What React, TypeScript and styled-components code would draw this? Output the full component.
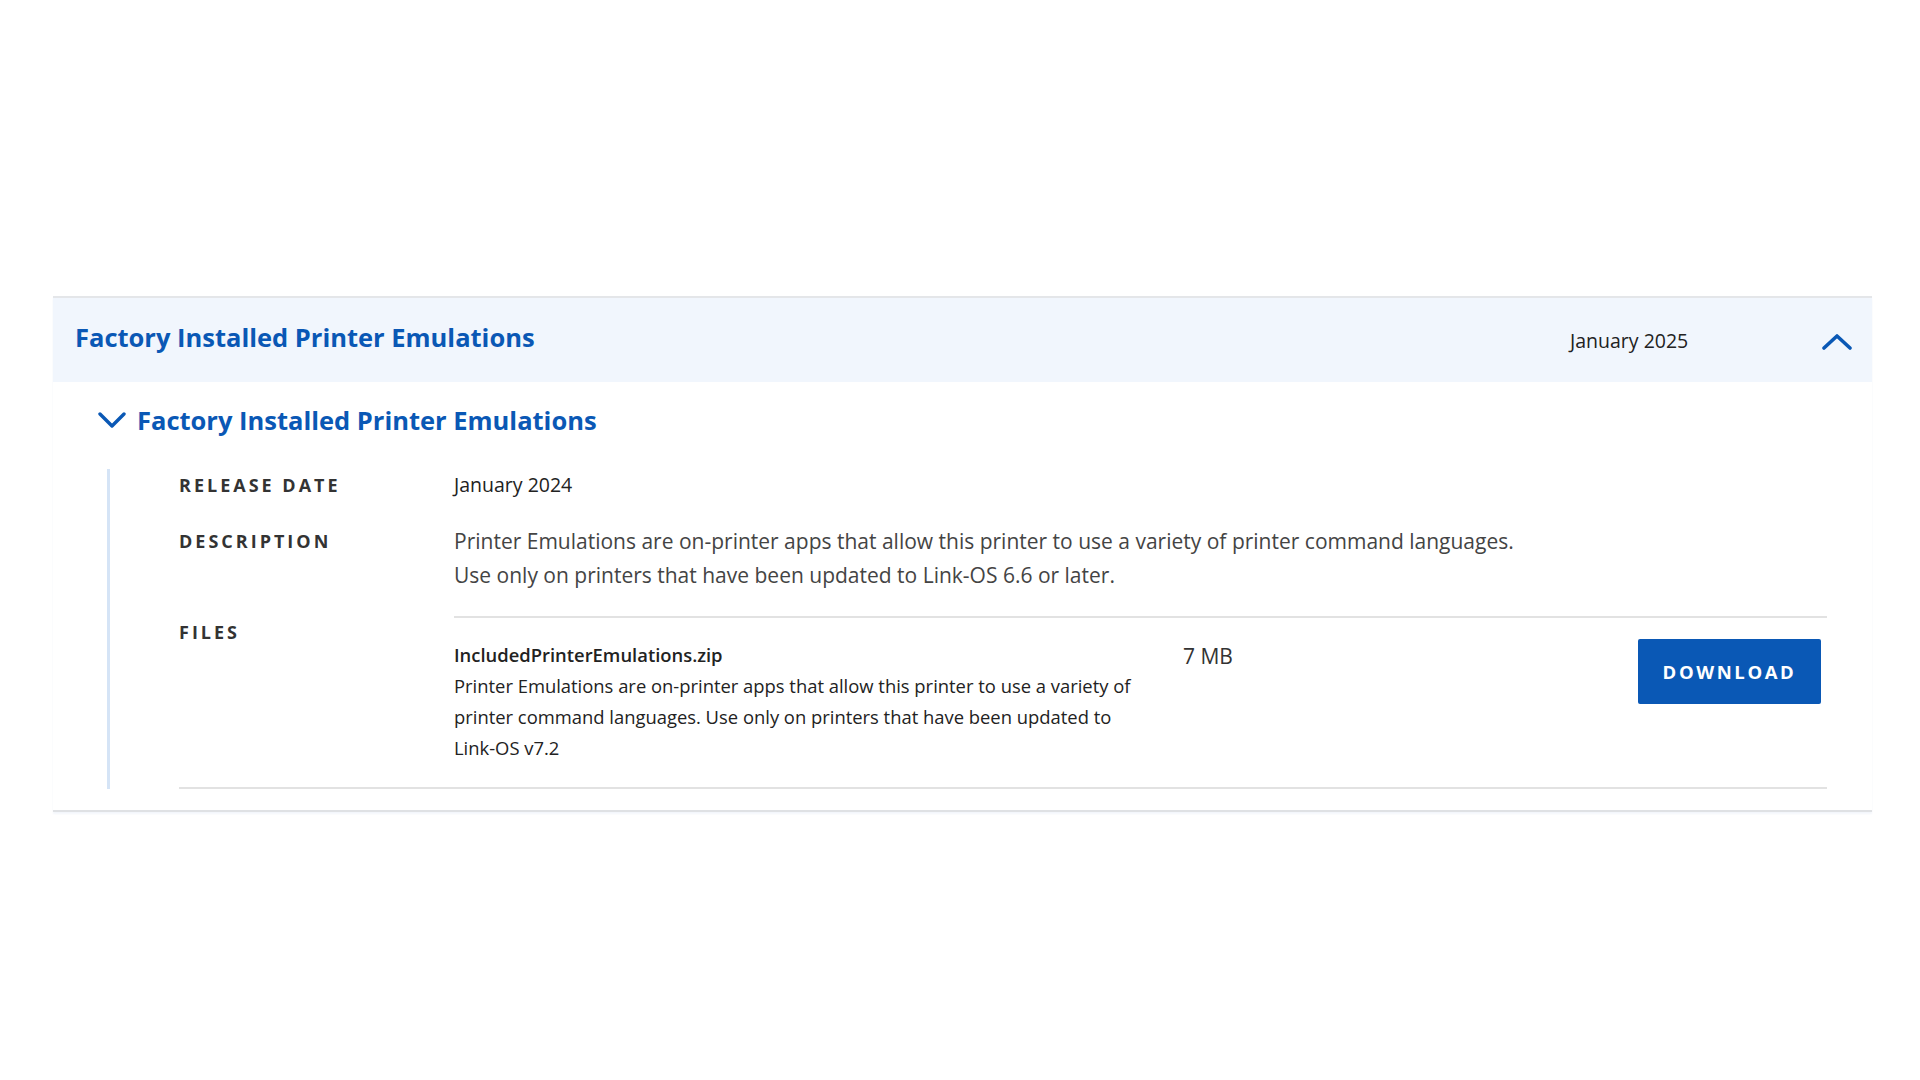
import { createGlobalStyle, styled } from 'styled-components';

const GlobalStyle = createGlobalStyle`
  html, body {
    margin: 0;
    padding: 0;
    background: #ffffff;
  }
  body {
    font-family: "Open Sans", Lato, Arial, sans-serif;
    color: #222;
  }
  * {
    box-sizing: border-box;
  }
`;

const ChevronUp = () => (
  <svg width="30" height="17" viewBox="0 0 30 17" fill="none">
    <polyline points="2,15 15,3 28,15" stroke="#0a58b5" strokeWidth="3.6" strokeLinecap="round" strokeLinejoin="round" />
  </svg>
);

const ChevronDown = () => (
  <svg width="28" height="16" viewBox="0 0 28 16" fill="none">
    <polyline points="2,2 14,14 26,2" stroke="#0a58b5" strokeWidth="3.4" strokeLinecap="round" strokeLinejoin="round" />
  </svg>
);

const App = () => {
  return (
    <>
      <GlobalStyle />
      <Page>
        <Panel>
          <Header>
            <Title>Factory Installed Printer Emulations</Title>
            <HeaderDate>January 2025</HeaderDate>
            <Toggle>
              <ChevronUp />
            </Toggle>
          </Header>
          <Body>
            <SubHeader>
              <ChevronDown />
              <SubTitle>Factory Installed Printer Emulations</SubTitle>
            </SubHeader>
            <Details>
              <Grid>
                <Label>Release Date</Label>
                <Value>January 2024</Value>

                <Label $top={32}>Description</Label>
                <Description>
                  Printer Emulations are on-printer apps that allow this printer to use a variety of printer command languages.
                  <br />
                  Use only on printers that have been updated to Link-OS 6.6 or later.
                </Description>

                <Label $top={24} $pad={4}>Files</Label>
                <FileList>
                  <FileRow>
                    <FileInfo>
                      <FileName>IncludedPrinterEmulations.zip</FileName>
                      <FileText>
                        Printer Emulations are on-printer apps that allow this printer to use a variety of printer command languages. Use only on printers that have been updated to <NoWrap>Link-OS</NoWrap> v7.2
                      </FileText>
                    </FileInfo>
                    <FileSize>7 MB</FileSize>
                    <DownloadButton>Download</DownloadButton>
                  </FileRow>
                </FileList>
              </Grid>
            </Details>
          </Body>
        </Panel>
      </Page>
    </>
  );
};

export default App;

const Page = styled.div`
  width: 1920px;
  height: 1080px;
  padding: 296px 48px 0 53px;
`;

const Panel = styled.section`
  width: 100%;
  border-top: 2px solid #e4e6e9;
  border-bottom: 2px solid #dfe1e4;
  box-shadow: 0 2px 2px rgba(10, 88, 181, 0.05);
`;

const Header = styled.div`
  height: 84px;
  display: flex;
  align-items: center;
  background: #f1f6fd;
  padding: 0 20px 0 22px;
`;

const Title = styled.h2`
  flex: 1;
  margin: 0 0 6px;
  font-size: 25.5px;
  font-weight: 700;
  color: #0a58b5;
`;

const HeaderDate = styled.span`
  width: 252px;
  font-size: 19.5px;
  color: #222;
  margin-top: 1px;
`;

const Toggle = styled.span`
  display: flex;
  align-items: center;
  margin-top: 2px;
`;

const Body = styled.div`
  padding: 22px 45px 21px 45px;
`;

const SubHeader = styled.div`
  display: flex;
  align-items: center;
  gap: 11px;
  height: 32px;
  h3 {
    margin: 0;
  }
`;

const SubTitle = styled.h3`
  font-size: 25.5px;
  font-weight: 700;
  color: #0a58b5;
`;

const Details = styled.div`
  margin: 33px 0 0 9px;
  border-left: 3px solid #d5e4f6;
  padding: 4px 0 0 69px;
`;

const Grid = styled.div`
  display: grid;
  grid-template-columns: 275px 1fr;
  align-items: start;
  border-bottom: 2px solid #e2e2e2;
`;

const Label = styled.div<{ $top?: number; $pad?: number }>`
  margin-top: ${(p) => p.$top ?? 0}px;
  padding-top: ${(p) => p.$pad ?? 0}px;
  font-size: 18px;
  line-height: 24px;
  font-weight: 700;
  letter-spacing: 3px;
  text-transform: uppercase;
  color: #333;
`;

const Value = styled.div`
  font-size: 19.5px;
  line-height: 24px;
  color: #222;
`;

const Description = styled.div`
  margin-top: 27px;
  font-size: 21px;
  line-height: 34px;
  color: #444;
`;

const FileList = styled.div`
  margin-top: 24px;
  border-top: 2px solid #e2e2e2;
`;

const FileRow = styled.div`
  display: flex;
  align-items: flex-start;
  padding: 21px 6px 24px 0;
`;

const FileInfo = styled.div`
  width: 700px;
  font-size: 18.4px;
  line-height: 31px;
  color: #222;
`;

const FileName = styled.div`
  font-weight: 600;
`;

const FileText = styled.div``;

const NoWrap = styled.span`
  white-space: nowrap;
`;

const FileSize = styled.div`
  flex: 1;
  margin-left: 29px;
  font-size: 21px;
  line-height: 34px;
  color: #333;
`;

const DownloadButton = styled.button`
  width: 183px;
  height: 65px;
  border: none;
  border-radius: 2px;
  background: #0a58b5;
  color: #fff;
  font-family: "Open Sans", Lato, Arial, sans-serif;
  font-size: 18.5px;
  font-weight: 700;
  letter-spacing: 2.6px;
  text-transform: uppercase;
  cursor: pointer;
`;
